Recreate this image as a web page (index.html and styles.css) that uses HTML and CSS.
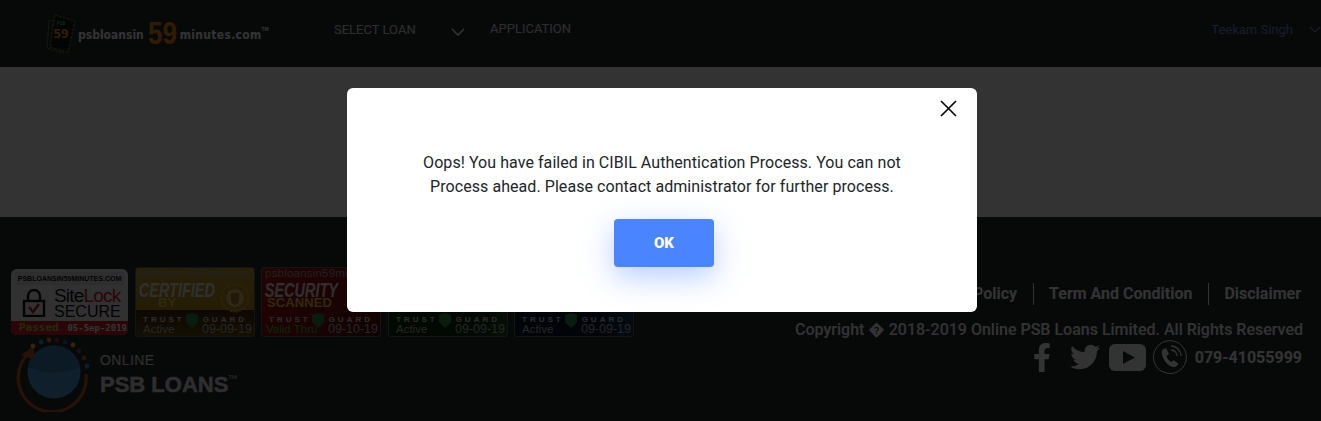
FILE: index.html
```html
<!DOCTYPE html>
<html lang="en">
<head>
    <meta charset="UTF-8">
    <meta name="viewport" content="width=device-width, initial-scale=1.0">
    <title>PSB Loans in 59 Minutes</title>
    <link rel="stylesheet" href="styles.css">
</head>
<body>
    <!-- Top bar -->
    <header class="topbar">
        <a class="brand">
            <svg class="brand-icon" viewBox="0 0 30 40" width="30" height="40">
                <path d="M3 6 L22 10 L17 39 L1 34 Z" fill="none" stroke="#8aa830" stroke-width="0.8" stroke-dasharray="2 1"/>
                <path d="M9 1 L29 7 L22 38 L4 33 Z" fill="#101818" stroke="#8aa830" stroke-width="0.8" stroke-dasharray="3 1"/>
                <text x="15" y="11" class="brand-icon-psb" text-anchor="middle">PSB</text>
                <text x="15" y="24" class="brand-icon-num" text-anchor="middle">59</text>
            </svg>
            <span class="brand-name">psbloansin</span>
            <span class="brand-num">59</span>
            <span class="brand-name brand-name-wide">minutes.com</span>
            <sup class="brand-tm">TM</sup>
        </a>
        <nav class="topnav">
            <a class="topnav-select">SELECT LOAN</a>
            <svg class="chevron" viewBox="0 0 14 8" width="14" height="8"><path d="M1 1 L7 7 L13 1" fill="none" stroke="#fff" stroke-width="1.6"/></svg>
            <a class="topnav-app">APPLICATION</a>
        </nav>
        <div class="user">
            <span class="user-name">Teekam Singh</span>
            <svg class="user-chevron" viewBox="0 0 12 7" width="12" height="7"><path d="M1 1 L6 6 L11 1" fill="none" stroke="#7f8fc0" stroke-width="1.2"/></svg>
        </div>
    </header>

    <main class="content"></main>

    <footer class="footer">
        <div class="footer-left">
            <div class="badges">
                <div class="badge-sitelock">
                    <div class="sl-domain">PSBLOANSIN59MINUTES.COM</div>
                    <div class="sl-body">
                        <svg viewBox="0 0 24 28" width="24" height="28">
                            <path d="M6 12 V7 a6 6 0 0 1 12 0 V12" fill="none" stroke="#111" stroke-width="2.4"/>
                            <rect x="2" y="12" width="20" height="15" fill="none" stroke="#111" stroke-width="2.4"/>
                            <path d="M7 18 L11 23 L17 15" fill="none" stroke="#c0202a" stroke-width="2.4"/>
                        </svg>
                        <div class="sl-words">
                            <div class="sl-name">Site<span class="sl-lock">Lock</span></div>
                            <div class="sl-secure">SECURE</div>
                        </div>
                    </div>
                    <div class="sl-foot"><span class="sl-passed">Passed</span><span>05-Sep-2019</span></div>
                </div>

                <div class="badge badge-gold">
                    <div class="badge-domain">psbloansin59minutes</div>
                    <div class="badge-title">CERTIFIED</div>
                    <div class="badge-sub badge-sub-by">BY</div>
                    <svg class="seal" viewBox="0 0 30 30" width="30" height="30">
                        <circle cx="15" cy="15" r="13.500" fill="#c08a20" stroke="#e0b040" stroke-width="2" stroke-dasharray="2 1"/>
                        <circle cx="15" cy="15" r="9" fill="#e8c060"/>
                        <path d="M10 9 H20 V16 Q20 21 15 23 Q10 21 10 16 Z" fill="#b08020" stroke="#f0e0a0" stroke-width="1.200"/>
                    </svg>
                    <div class="badge-trust"><span>TRUST</span><i class="shield"></i><span>GUARD</span></div>
                    <div class="badge-foot"><span>Active</span><span>09-09-19</span></div>
                </div>

                <div class="badge badge-red">
                    <div class="badge-domain">psbloansin59minutes</div>
                    <div class="badge-title">SECURITY</div>
                    <div class="badge-sub badge-sub-scan">SCANNED</div>
                    <div class="badge-trust"><span>TRUST</span><i class="shield"></i><span>GUARD</span></div>
                    <div class="badge-foot"><span class="badge-valid">Valid Thru</span><span>09-10-19</span></div>
                </div>

                <div class="badge badge-green">
                    <div class="badge-domain">psbloansin59minutes</div>
                    <div class="badge-trust"><span>TRUST</span><i class="shield"></i><span>GUARD</span></div>
                    <div class="badge-foot"><span>Active</span><span>09-09-19</span></div>
                </div>

                <div class="badge badge-blue">
                    <div class="badge-domain">psbloansin59minutes</div>
                    <div class="badge-trust"><span>TRUST</span><i class="shield"></i><span>GUARD</span></div>
                    <div class="badge-foot"><span>Active</span><span>09-09-19</span></div>
                </div>
            </div>

            <div class="psb-logo">
                <svg viewBox="0 0 76 76" width="76" height="76">
                    <circle cx="39" cy="36" r="26.500" fill="#4c9cd4"/>
                    <path d="M13 31 Q39 42 65 31 A26.500 26.500 0 0 0 13 31 Z" fill="#3a80b4"/>
                    <path d="M12 19 A34 34 0 1 0 71 38" fill="none" stroke="#c85a28" stroke-width="3.200"/>
                    <path d="M6 19 L19 10 L19 24 Z" fill="#c85a28"/>
                    <circle cx="18" cy="10" r="2.400" fill="#f0c040"/>
                    <circle cx="26" cy="6" r="2.400" fill="#30a0d8"/>
                    <circle cx="34" cy="4" r="2.400" fill="#f08030"/>
                    <circle cx="42" cy="4" r="2.400" fill="#a03070"/>
                    <circle cx="50" cy="6" r="2.400" fill="#3060c0"/>
                    <circle cx="58" cy="9" r="2.400" fill="#f0c040"/>
                    <circle cx="64" cy="15" r="2.400" fill="#8040a0"/>
                    <circle cx="69" cy="22" r="2.400" fill="#e06020"/>
                    <circle cx="72" cy="30" r="2.400" fill="#30a0d8"/>
                </svg>
                <div class="psb-words">
                    <div class="psb-online">ONLINE</div>
                    <div class="psb-name">PSB LOANS<sup>TM</sup></div>
                </div>
            </div>
        </div>

        <div class="footer-right">
            <ul class="footer-links">
                <li>Privacy Policy</li>
                <li>Term And Condition</li>
                <li>Disclaimer</li>
            </ul>
            <p class="copyright">Copyright � 2018-2019 Online PSB Loans Limited. All Rights Reserved</p>
            <div class="social">
                <svg class="social-fb" viewBox="0 0 320 512" width="18" height="29"><path fill="#fff" d="M279.14 288l14.22-92.66h-88.91v-60.13c0-25.35 12.42-50.06 52.24-50.06h40.42V6.26S260.43 0 225.36 0c-73.22 0-121.08 44.38-121.08 124.72v70.62H22.89V288h81.39v224h100.17V288z"/></svg>
                <svg class="social-tw" viewBox="0 0 512 512" width="30" height="30"><path fill="#fff" d="M459.37 151.716c.325 4.548.325 9.097.325 13.645 0 138.72-105.583 298.558-298.558 298.558-59.452 0-114.68-17.219-161.137-47.106 8.447.974 16.568 1.299 25.34 1.299 49.055 0 94.213-16.568 130.274-44.832-46.132-.975-84.792-31.188-98.112-72.772 6.498.974 12.995 1.624 19.818 1.624 9.421 0 18.843-1.3 27.614-3.573-48.081-9.747-84.143-51.98-84.143-102.985v-1.299c13.969 7.797 30.214 12.67 47.431 13.319-28.264-18.843-46.781-51.005-46.781-87.391 0-19.492 5.197-37.36 14.294-52.954 51.655 63.675 129.3 105.258 216.365 109.807-1.624-7.797-2.599-15.918-2.599-24.04 0-57.828 46.782-104.934 104.934-104.934 30.213 0 57.502 12.67 76.67 33.137 23.715-4.548 46.456-13.32 66.599-25.34-7.798 24.366-24.366 44.833-46.132 57.827 21.117-2.273 41.584-8.122 60.426-16.243-14.292 20.791-32.161 39.308-52.628 54.253z"/></svg>
                <svg class="social-yt" viewBox="0 0 37 27" width="37" height="27">
                    <rect width="37" height="27" rx="6" fill="#fff"/>
                    <path d="M14 7 L26 13.5 L14 20 Z" fill="#232d2d"/>
                </svg>
                <svg class="social-call" viewBox="0 0 36 36" width="36" height="36">
                    <path d="M9 32 A16.500 16.500 0 1 1 20 34.500 Q14 35 9 32" fill="none" stroke="#fff" stroke-width="1"/>
                    <path d="M10 11 l4 -2 l3 6 l-2.500 2 c0.500 2.500 2.500 5 5 6 l2 -2 l5 4 l-3 3 c-7 1 -15 -9 -13.500 -17 z" fill="#fff"/>
                    <path d="M19 11 a6 6 0 0 1 6 6 M19 7 a10 10 0 0 1 10 10" fill="none" stroke="#fff" stroke-width="1.300"/>
                </svg>
                <span class="social-phone">079-41055999</span>
            </div>
        </div>
    </footer>

    <!-- Error popup -->
    <div class="overlay">
        <div class="modal">
            <button class="modal-close" aria-label="Close">
                <svg viewBox="0 0 17 17" width="17" height="17"><path d="M1 1 L16 16 M16 1 L1 16" stroke="#000" stroke-width="1.600" fill="none"/></svg>
            </button>
            <p class="modal-text">Oops! You have failed in CIBIL Authentication Process. You can not<br>Process ahead. Please contact administrator for further process.</p>
            <button class="modal-ok">OK</button>
        </div>
    </div>
</body>
</html>
```

FILE: styles.css
```css
* {
    box-sizing: border-box;
}

html, body {
    margin: 0;
    padding: 0;
    height: 100%;
    overflow: hidden;
    font-family: Roboto, Arial, sans-serif;
    background: #232d2d;
}

/* Top bar */
.topbar {
    height: 67px;
    background: #232d2d;
    display: flex;
    align-items: center;
    padding-left: 45px;
    color: #fff;
}

.brand {
    display: flex;
    align-items: center;
    width: 289px;
    height: 40px;
}

.brand-icon {
    margin: 0 2px 0 1px;
}

.brand-icon-psb {
    font: bold 5px "Noto Sans", sans-serif;
    fill: #20b040;
}

.brand-icon-num {
    font: bold 13px "Noto Sans", sans-serif;
    fill: #f09020;
}

.brand-name {
    font: bold 12px "DejaVu Sans Condensed", "DejaVu Sans", sans-serif;
    color: #fff;
    margin-top: 3px;
}

.brand-name-wide {
    letter-spacing: 0.3px;
}

/* squeezed to the logo's narrow digits */
.brand-num {
    display: inline-block;
    width: 29px;
    font: bold 31px/30px "Liberation Sans", sans-serif;
    color: #f09000;
    margin: 0 3px 0 4px;
    transform: scaleX(0.84);
    transform-origin: left center;
}

.brand-tm {
    font: bold 5px Arial, sans-serif;
    margin-bottom: 10px;
}

.topnav {
    display: flex;
    align-items: center;
    font-size: 13px;
    color: #e4e4e4;
    margin-top: -8px;
}

.topnav-select {
    width: 117px;
}

.chevron {
    margin-top: 5px;
}

.topnav-app {
    margin-left: 25px;
    margin-top: -2px;
}

.user {
    margin-left: auto;
    display: flex;
    align-items: center;
    font-size: 13px;
    color: #7f8fd0;
    margin-top: -8px;
    padding-left: 1px;
}

.user-chevron {
    margin: 0 0 0 16px;
}

.content {
    height: 150px;
    background: #fff;
}

/* Footer */
.footer {
    height: 204px;
    background: #232d2d;
    display: flex;
    justify-content: space-between;
    color: #fff;
}

.footer-left {
    padding: 50px 0 0 11px;
}

.badges {
    display: flex;
    align-items: center;
    gap: 6px;
    height: 70px;
}

.badge-sitelock {
    width: 117px;
    height: 66px;
    margin-right: 1px;
    border-radius: 6px;
    overflow: hidden;
    background: #f4f4f4;
    color: #111;
    display: flex;
    flex-direction: column;
}

.sl-domain {
    font: bold 7px Arial, sans-serif;
    text-align: center;
    background: #e6e6e6;
    margin: 3px 4px 0;
    padding: 3px 0;
    white-space: nowrap;
}

.sl-body {
    flex: 1;
    display: flex;
    align-items: center;
    padding-left: 11px;
    gap: 8px;
}

.sl-name {
    font: 19px/16px "Liberation Sans", sans-serif;
    letter-spacing: -0.8px;
}

.sl-lock {
    color: #d02028;
}

.sl-secure {
    font: 16px/15px "Liberation Sans", sans-serif;
}

.sl-foot {
    height: 14px;
    background: #d02028;
    color: #fff;
    font: bold 9px/14px "DejaVu Sans Mono", monospace;
    display: flex;
    justify-content: space-between;
    padding: 0 1px 0 8px;
}

.sl-passed {
    color: #b0d040;
    font-size: 11px;
}

.badge {
    position: relative;
    width: 120px;
    height: 70px;
    border: 1px solid #666;
    border-radius: 3px;
    overflow: hidden;
    display: flex;
    flex-direction: column;
    font-family: "Liberation Sans", sans-serif;
}

.badge-gold {
    background: linear-gradient(#c89c28, #b88c20 62%, #3e2c08 62%, #6a4e14);
}

.badge-red {
    background: linear-gradient(135deg, #b01414, #801010 62%, #501010);
}

.badge-green {
    background: linear-gradient(100deg, #0a2e0a 70%, #1c501c);
    margin-left: 1px;
}

.badge-blue {
    background: linear-gradient(100deg, #061a32 70%, #123a60);
}

.badge-domain {
    font-size: 11.5px;
    line-height: 11px;
    color: #a0a0a0;
    text-align: center;
    white-space: nowrap;
    overflow: hidden;
    letter-spacing: 0.2px;
}

/* the seal's lettering is a condensed face, none is installed so squeeze it */
.badge-title {
    font: italic bold 21px/17px "Liberation Sans", sans-serif;
    color: #e8e8f0;
    padding-left: 4px;
    margin-top: 2px;
    white-space: nowrap;
    transform: scaleX(0.69);
    transform-origin: left center;
}

.badge-sub {
    font: bold 13px/13px "Liberation Sans", sans-serif;
    color: #e8d040;
    padding-left: 5px;
    margin-top: -2px;
}

.badge-sub-by {
    padding-left: 22px;
}

.badge-sub-scan {
    letter-spacing: 0.1px;
}

.seal {
    position: absolute;
    right: 4px;
    top: 15px;
}

.badge-trust {
    margin-top: auto;
    display: flex;
    justify-content: space-between;
    align-items: center;
    padding: 0 7px;
    font: bold 8px/9px "Liberation Sans", sans-serif;
    letter-spacing: 3px;
    color: #ddd;
}

.shield {
    width: 12px;
    height: 15px;
    background: #2a9040;
    clip-path: polygon(0 12%, 50% 0, 100% 12%, 100% 62%, 50% 100%, 0 62%);
    margin: -2px 3px -4px 0;
}

.badge-foot {
    display: flex;
    justify-content: space-between;
    padding: 0 2px 1px 7px;
    font-size: 12.5px;
    line-height: 11px;
    color: #bbb;
}

.badge-foot span:first-child {
    font-size: 11.5px;
}

.badge-valid {
    color: #30c040;
    margin-left: -3px;
}

.psb-logo {
    display: flex;
    margin-top: -1px;
    margin-left: 4px;
}

.psb-words {
    margin: 14px 0 0 9px;
}

.psb-online {
    font: 14px/20px "Liberation Sans", sans-serif;
    letter-spacing: 0.4px;
    color: #eee;
}

.psb-name {
    font: bold 22px/26px "Liberation Sans", sans-serif;
    color: #e4e4e4;
    -webkit-text-stroke: 0.4px #e4e4e4;
    white-space: nowrap;
    margin-top: 2px;
}

.psb-name sup {
    font-size: 6px;
    font-weight: normal;
    -webkit-text-stroke: 0;
    vertical-align: 13px;
    line-height: 0;
}

.footer-right {
    display: flex;
    flex-direction: column;
    align-items: flex-end;
    padding: 66px 18px 0 0;
    font-weight: 700;
    font-size: 16px;
}

.footer-links {
    display: flex;
    list-style: none;
    margin: 0;
    padding: 0 2px 0 0;
    height: 22px;
    line-height: 22px;
}

.footer-links li {
    padding: 0 16px 0 15px;
    border-left: 1px solid #fff;
}

.footer-links li:first-child {
    border-left: none;
}

.footer-links li:last-child {
    padding-right: 0;
}

.copyright {
    margin: 14px 0 0;
    line-height: 22px;
    font-weight: 500;
    white-space: nowrap;
}

.social {
    display: flex;
    align-items: center;
    height: 38px;
    margin-top: -3px;
    padding-right: 1px;
}

.social-tw {
    margin-left: 19px;
}

.social-yt {
    margin-left: 9px;
}

.social-call {
    margin-left: 6px;
}

.social-phone {
    margin-left: 7px;
}

/* Popup */
.overlay {
    position: fixed;
    top: 0;
    left: 0;
    right: 0;
    bottom: 0;
    background: rgba(0, 0, 0, 0.8);
    display: flex;
    justify-content: center;
    align-items: flex-start;
    padding: 88px 0 0 3px;
}

.modal {
    position: relative;
    width: 630px;
    height: 224px;
    background: #fff;
    border-radius: 6px;
    text-align: center;
    padding-top: 63px;
}

.modal-close {
    position: absolute;
    top: 12px;
    right: 20px;
    width: 17px;
    height: 17px;
    padding: 0;
    border: none;
    background: none;
    line-height: 0;
}

.modal-text {
    margin: 0;
    font-size: 16px;
    line-height: 24px;
    letter-spacing: 0.06px;
    color: #212529;
}

.modal-ok {
    margin: 20px 0 0 4px;
    width: 100px;
    height: 48px;
    border: none;
    border-radius: 4px;
    background: #4a84ff;
    color: #fff;
    font: 900 15px Roboto, sans-serif;
    box-shadow: 0 10px 30px rgba(74, 132, 255, 0.4);
}
```
